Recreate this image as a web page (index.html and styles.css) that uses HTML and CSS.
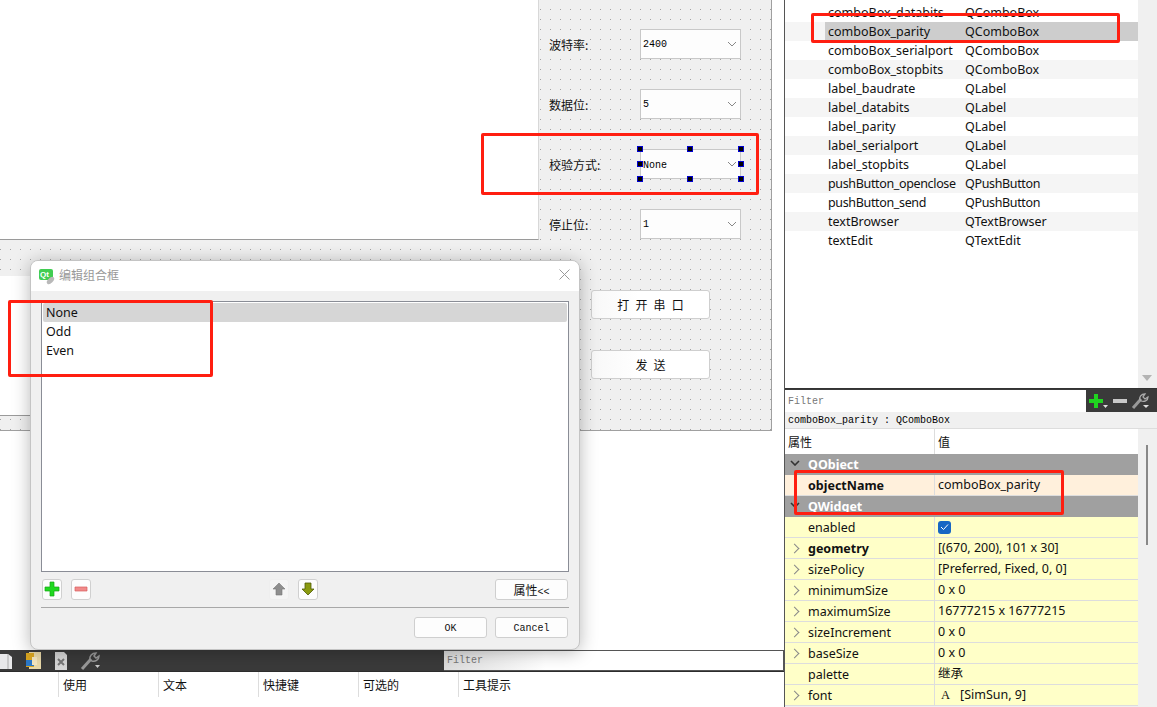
FILE: index.html
```html
<!DOCTYPE html>
<html lang="zh">
<head>
  <meta charset="UTF-8" />
  <title>Qt Designer</title>
  <link rel="stylesheet" href="styles.css">
</head>
<body>

  <div class="desk">

    <!-- form being edited -->
    <section class="form-area">
      <div class="text-browser"></div>
      <div class="text-edit"></div>

      <div class="form-row row-baud"><span class="form-label">波特率:</span><div class="combo">2400<svg class="chev" viewBox="0 0 10 6"><path d="M1 1l4 4 4-4"/></svg></div></div>
      <div class="form-row row-data"><span class="form-label">数据位:</span><div class="combo">5<svg class="chev" viewBox="0 0 10 6"><path d="M1 1l4 4 4-4"/></svg></div></div>
      <div class="form-row row-parity"><span class="form-label">校验方式:</span>
        <div class="combo combo-sel">None<svg class="chev" viewBox="0 0 10 6"><path d="M1 1l4 4 4-4"/></svg>
          <i class="h h1"></i><i class="h h2"></i><i class="h h3"></i><i class="h h4"></i><i class="h h5"></i><i class="h h6"></i><i class="h h7"></i><i class="h h8"></i>
        </div>
      </div>
      <div class="form-row row-stop"><span class="form-label">停止位:</span><div class="combo">1<svg class="chev" viewBox="0 0 10 6"><path d="M1 1l4 4 4-4"/></svg></div></div>
      <button class="form-btn btn-open">打 开 串 口</button>
      <button class="form-btn btn-send">发 送</button>
    </section>

    <!-- action editor -->
    <section class="action-editor">
      <div class="action-bar">
        <div class="action-tools">
          <svg class="tool" width="12" height="20" viewBox="0 0 12 20"><path d="M-6 3H8l4 3v12H-6z" fill="#e8e8ea"/><path d="M8 3v15" stroke="#aaa" fill="none"/></svg>
          <svg class="tool" width="18" height="20" viewBox="0 0 18 20"><path d="M5 1h12v17H5z" fill="#e9d9a8"/><path d="M2 2h8v14H2z" fill="#d9a520"/><path d="M2 9h8v6H2z" fill="#2b78c8"/><path d="M8 6h5v8H8z" fill="#f3e6c0"/></svg>
          <svg class="tool" width="14" height="20" viewBox="0 0 14 20"><path d="M1 1h9l3 3v15H1z" fill="#d6d6d6"/><path d="M4 8l6 6M10 8l-6 6" stroke="#777" stroke-width="2"/></svg>
          <svg class="tool" width="22" height="20" viewBox="0 0 22 20"><path d="M2 18L11 8" stroke="#999" stroke-width="3"/><path d="M10 9c-1-4 2-7 6-7l-2 3 2 2 3-2c0 4-4 6-7 5z" fill="none" stroke="#999" stroke-width="1.500"/><path d="M15 14h5l-2.500 3z" fill="#ccc"/></svg>
        </div>
        <div class="action-filter">Filter</div>
      </div>
      <div class="action-head">
        <span>使用</span><span>文本</span><span>快捷键</span><span>可选的</span><span>工具提示</span>
      </div>
    </section>

    <!-- combo box items dialog -->
    <section class="dialog">
      <header class="dlg-title">
        <span class="qt-logo">Qt</span>
        <span class="dlg-name">编辑组合框</span>
        <svg class="dlg-close" width="11" height="11" viewBox="0 0 11 11"><path d="M.5.500l10 10M10.500.500l-10 10"/></svg>
      </header>
      <div class="dlg-body">
        <ul class="item-list">
          <li class="item-on">None</li>
          <li>Odd</li>
          <li>Even</li>
        </ul>
        <div class="dlg-tools">
          <button class="ico-btn"><svg width="16" height="16" viewBox="0 0 16 16"><path d="M6 1h4v5h5v4h-5v5H6v-5H1V6h5z" fill="#1fd91f" stroke="#14a814" stroke-width=".7"/></svg></button>
          <button class="ico-btn"><svg width="16" height="16" viewBox="0 0 16 16"><path d="M2 6h12v4H2z" fill="#f08a8a" stroke="#d85c5c" stroke-width=".7"/></svg></button>
          <span class="tools-mid">
            <button class="ico-btn ico-off"><svg width="14" height="14" viewBox="0 0 14 14"><path d="M7 1l6 6h-3v6H4V7H1z" fill="#8e8e8e" stroke="#777" stroke-width=".6"/></svg></button>
            <button class="ico-btn"><svg width="14" height="14" viewBox="0 0 14 14"><path d="M7 13L1 7h3V1h6v6h3z" fill="#8a9a10" stroke="#4f5a06" stroke-width=".8"/></svg></button>
          </span>
          <button class="txt-btn props-btn">属性<span class="lt">&lt;&lt;</span></button>
        </div>
        <div class="dlg-foot">
          <button class="txt-btn">OK</button>
          <button class="txt-btn">Cancel</button>
        </div>
      </div>
    </section>

    <!-- object inspector + property editor -->
    <aside class="side">
      <div class="obj-panel">
        <table class="obj-table">
          <tr><td>comboBox_databits</td><td>QComboBox</td></tr>
          <tr class="alt sel"><td>comboBox_parity</td><td>QComboBox</td></tr>
          <tr><td>comboBox_serialport</td><td>QComboBox</td></tr>
          <tr class="alt"><td>comboBox_stopbits</td><td>QComboBox</td></tr>
          <tr><td>label_baudrate</td><td>QLabel</td></tr>
          <tr class="alt"><td>label_databits</td><td>QLabel</td></tr>
          <tr><td>label_parity</td><td>QLabel</td></tr>
          <tr class="alt"><td>label_serialport</td><td>QLabel</td></tr>
          <tr><td>label_stopbits</td><td>QLabel</td></tr>
          <tr class="alt tight"><td>pushButton_openclose</td><td>QPushButton</td></tr>
          <tr class="tight"><td>pushButton_send</td><td>QPushButton</td></tr>
          <tr class="alt"><td>textBrowser</td><td>QTextBrowser</td></tr>
          <tr><td>textEdit</td><td>QTextEdit</td></tr>
        </table>
      </div>
      <div class="prop-filter">
        <div class="prop-input">Filter</div>
        <svg class="bar-ico" width="22" height="18" viewBox="0 0 22 18"><path d="M6 2h4v5h5v4h-5v5H6v-5H1V7h5z" fill="#20d420"/><path d="M15 13h5l-2.500 3z" fill="#ddd"/></svg>
        <svg class="bar-ico" width="16" height="18" viewBox="0 0 16 18"><path d="M1 7h14v4H1z" fill="#c8c8c8"/></svg>
        <svg class="bar-ico" width="20" height="18" viewBox="0 0 20 18"><path d="M3 16L11 7" stroke="#999" stroke-width="3"/><path d="M10 8c-1-3 1-6 5-6l-2 3 2 2 3-2c0 4-4 5-7 4z" fill="none" stroke="#aaa" stroke-width="1.300"/><path d="M13 13h6l-3 3z" fill="#ddd"/></svg>
      </div>
      <div class="obj-name">comboBox_parity : QComboBox</div>
      <div class="prop-wrap">
        <div class="prop-table">
          <div class="prop-head"><span>属性</span><span>值</span></div>
          <div class="p-group"><svg class="arr" viewBox="0 0 10 6"><path d="M1 1l4 4 4-4"/></svg>QObject</div>
          <div class="p-row p-peach"><span class="p-k"><b>objectName</b></span><span class="p-v">comboBox_parity</span></div>
          <div class="p-group"><svg class="arr" viewBox="0 0 10 6"><path d="M1 1l4 4 4-4"/></svg>QWidget</div>
          <div class="p-row"><span class="p-k">enabled</span><span class="p-v"><span class="check"><svg width="9" height="8" viewBox="0 0 9 8"><path d="M1 4l2.500 2.500L8 1.500"/></svg></span></span></div>
          <div class="p-row p-more"><span class="p-k"><b>geometry</b></span><span class="p-v">[(670, 200), 101 x 30]</span></div>
          <div class="p-row p-more"><span class="p-k">sizePolicy</span><span class="p-v">[Preferred, Fixed, 0, 0]</span></div>
          <div class="p-row p-more"><span class="p-k">minimumSize</span><span class="p-v">0 x 0</span></div>
          <div class="p-row p-more"><span class="p-k">maximumSize</span><span class="p-v">16777215 x 16777215</span></div>
          <div class="p-row p-more"><span class="p-k">sizeIncrement</span><span class="p-v">0 x 0</span></div>
          <div class="p-row p-more"><span class="p-k">baseSize</span><span class="p-v">0 x 0</span></div>
          <div class="p-row"><span class="p-k">palette</span><span class="p-v">继承</span></div>
          <div class="p-row p-more"><span class="p-k">font</span><span class="p-v"><span class="font-a">A</span>[SimSun, 9]</span></div>
        </div>
        <div class="p-scroll"><i></i></div>
      </div>
    </aside>

    <!-- red annotation boxes -->
    <div class="mark m-list"></div>
    <div class="mark m-combo"></div>
    <div class="mark m-obj"></div>
    <div class="mark m-prop"></div>
  </div>

</body>
</html>
```

FILE: styles.css
```css
/* Base */
* { box-sizing: border-box; margin: 0; padding: 0; }
html, body { width: 100%; height: 100%; overflow: hidden; }
body {
  font-family: "Noto Sans", "Noto Sans CJK SC", sans-serif;
  font-size: 12px;
  color: #111;
  background: #fff;
}
button { font-family: inherit; }

/* Free canvas: the screenshot is a stack of overlapping windows */
.desk { position: relative; width: 1157px; height: 707px; overflow: hidden; }

/* Form */
.form-area {
  position: absolute;
  left: 0; top: 0;
  width: 772px; height: 431px;
  background-color: #f0f0f0;
  background-image: radial-gradient(circle at 0.5px 0.5px, #a4a4a4 0.6px, transparent 0.6px);
  background-size: 10px 10px;
  background-position: 0 -1px;
  border-right: 1px solid #a0a0a0;
  border-bottom: 1px solid #a0a0a0;
}
.text-browser {
  position: absolute;
  left: 0; top: 0;
  width: 539px; height: 240px;
  background: #fff;
  border-right: 1px solid #d8d8d8;
  border-bottom: 1px solid #9a9a9a;
}
.text-edit {
  position: absolute;
  left: 0; top: 276px;
  width: 539px; height: 140px;
  background: #fff;
  border-bottom: 1px solid #9a9a9a;
}
.form-row {
  position: absolute;
  left: 549px;
  display: flex;
  align-items: center;
  height: 30px;
  font-family: "Noto Sans CJK SC", sans-serif;
}
.row-baud { top: 29px; }
.row-data { top: 89px; }
.row-parity { top: 149px; }
.row-stop { top: 209px; }
.form-label { width: 91px; font-size: 12px; }
.combo {
  position: relative;
  display: flex;
  align-items: center;
  width: 101px; height: 30px;
  padding-left: 2px;
  background: #fdfdfd;
  border: 1px solid #c8c8c8;
  font-family: "Liberation Mono", monospace;
  font-size: 10px;
  color: #000;
}
.combo-sel { padding-top: 2px; }
.chev { position: absolute; right: 3px; top: 11px; width: 10px; height: 6px; fill: none; stroke: #888; stroke-width: 1; }

/* selection handles */
.h { position: absolute; width: 6px; height: 6px; background: #000; border: 1px solid #0000d0; }
.h1 { left: -4px; top: -4px; }
.h2 { left: 46px; top: -4px; }
.h3 { left: 97px; top: -4px; }
.h4 { left: -4px; top: 11px; }
.h5 { left: 97px; top: 11px; }
.h6 { left: -4px; top: 26px; }
.h7 { left: 46px; top: 26px; }
.h8 { left: 97px; top: 26px; }

.form-btn {
  position: absolute;
  left: 591px;
  width: 119px; height: 29px;
  background: linear-gradient(90deg, #f8f8f8, #fff 40%);
  border: 1px solid #cfcfcf;
  border-radius: 3px;
  font-family: "Noto Sans CJK SC", sans-serif;
  font-size: 12px;
  color: #111;
  word-spacing: 3.500px;
}
.btn-open { top: 290px; }
.btn-send { top: 350px; }

/* Action editor */
.action-editor { position: absolute; left: 0; top: 650px; width: 784px; }
.action-bar { display: flex; height: 22px; background: #3a3a3a; border-bottom: 1px solid #2c2c2c; }
.action-tools { display: flex; align-items: center; gap: 12px; width: 444px; }
.tool { display: block; flex: none; }
.action-filter {
  flex: 1;
  padding: 4px 0 0 3px;
  background: linear-gradient(90deg, #dcdcdc, #fff 30%);
  border: 1px solid #555;
  border-left: 0;
  font-family: "Liberation Mono", monospace;
  font-size: 10px;
  color: #777;
}
.action-head {
  display: flex;
  height: 25px;
  padding-left: 58px;
  background: #fff;
  font-family: "Noto Sans CJK SC", sans-serif;
  font-size: 12px;
}
.action-head span { width: 100px; padding: 3px 0 0 4px; border-left: 1px solid #ddd; line-height: 20px; }

/* Dialog */
.dialog {
  position: absolute;
  left: 30px; top: 260px;
  width: 550px; height: 390px;
  display: flex;
  flex-direction: column;
  background: #f0f0f0;
  border: 1px solid #c4c4c4;
  border-radius: 8px;
  box-shadow: 0 2px 18px rgba(0,0,0,0.28);
  overflow: hidden;
}
.dlg-title {
  display: flex;
  align-items: center;
  flex: none;
  height: 30px;
  padding: 0 9px 4px 8px;
  background: #fff;
}
.qt-logo {
  position: relative;
  width: 14px; height: 11px;
  margin-right: 6px;
  padding-left: 1px;
  background: #41cd52;
  border-radius: 2px;
  color: #fff;
  font-family: "Liberation Sans", sans-serif;
  font-size: 8px;
  font-weight: bold;
  line-height: 11px;
}
.qt-logo::after {
  content: "";
  position: absolute;
  right: -2px; bottom: -3px;
  width: 9px; height: 5px;
  background: #b9b9b9;
  border-radius: 50%;
  transform: rotate(-45deg);
}
.dlg-name { font-family: "Noto Sans CJK SC", sans-serif; font-size: 12px; color: #999; }
.dlg-close { margin-left: auto; fill: none; stroke: #999; }
.dlg-body { flex: 1; display: flex; flex-direction: column; padding: 10px 10px 0; }
.item-list {
  list-style: none;
  height: 271px;
  padding: 1px;
  background: #fff;
  border: 1px solid #8a8d96;
}
.item-list li { height: 19px; padding-left: 3px; font-size: 12.500px; line-height: 19px; }
.item-list .item-on { background: #d6d6d6; border-radius: 2px; }
.dlg-tools { display: flex; align-items: center; height: 22px; margin-top: 6px; padding-left: 1px; }
.ico-btn {
  display: flex;
  align-items: center;
  justify-content: center;
  width: 20px; height: 21px;
  margin-right: 9px;
  background: #fdfdfd;
  border: 1px solid #d0d0d0;
  border-radius: 3px;
}
.ico-off { background: #f4f4f4; border-color: #eee; }
.tools-mid { display: flex; margin-left: 169px; }
.txt-btn {
  width: 73px; height: 21px;
  padding-top: 2px;
  background: #fdfdfd;
  border: 1px solid #cfcfcf;
  border-radius: 3px;
  font-family: "Liberation Mono", "Noto Sans CJK SC", monospace;
  font-size: 10px;
  color: #111;
}
.props-btn { margin-left: auto; margin-right: 1px; padding-top: 0; font-family: "Noto Sans CJK SC", sans-serif; font-size: 12px; }
.lt { font-family: "Liberation Mono", monospace; font-size: 10px; }
.dlg-foot {
  display: flex;
  justify-content: flex-end;
  gap: 8px;
  margin-top: 7px;
  padding: 9px 1px 0 0;
  border-top: 1px solid #a8a8a8;
}

/* Side panels */
.side {
  position: absolute;
  left: 784px; top: 0;
  width: 373px; height: 707px;
  display: flex;
  flex-direction: column;
  background: #f0f0f0;
  border-left: 1px solid #555;
}
.obj-panel { position: relative; height: 388px; flex: none; background: #fff; border-right: 19px solid #f0f0f0; }
.obj-panel::after {
  content: "";
  position: absolute;
  right: -14px; top: 375px;
  border: 5px solid transparent;
  border-top: 6px solid #b4b4b4;
  border-bottom: 0;
}
.obj-table { width: 100%; margin-top: 3px; border-spacing: 0; font-size: 12.500px; }
.obj-table td { height: 19px; line-height: 19px; padding: 0; }
.obj-table td:first-child { width: 180px; padding-left: 3px; border-left: 40px solid transparent; background-clip: padding-box; }
.obj-table .alt { background: #f5f5f5; }
.obj-table .sel td { background-color: #cdcdcd; }
.obj-table .tight td { letter-spacing: -0.35px; }
.prop-filter { display: flex; align-items: center; flex: none; gap: 2px; height: 24px; background: #3a3a3a; border-top: 1px solid #333; }
.prop-input {
  width: 301px; height: 22px;
  padding: 6px 0 0 3px;
  background: #fff;
  font-family: "Liberation Mono", monospace;
  font-size: 10px;
  line-height: 12px;
  color: #777;
}
.obj-name {
  flex: none;
  height: 17px;
  padding-left: 3px;
  background: #f0f0f0;
  border-bottom: 1px solid #ddd;
  font-family: "Liberation Mono", monospace;
  font-size: 10px;
  line-height: 17px;
  color: #000;
}
.prop-wrap { flex: 1; display: flex; min-height: 0; }
.prop-table { width: 353px; font-size: 12.500px; }
.prop-head {
  display: flex;
  height: 25px;
  background: #fff;
  font-family: "Noto Sans CJK SC", sans-serif;
  font-size: 12px;
  line-height: 25px;
}
.prop-head span { padding-left: 3px; }
.prop-head span:first-child { width: 150px; border-right: 1px solid #ddd; }
.p-group {
  display: flex;
  align-items: center;
  position: relative;
  height: 21px;
  padding-left: 23px;
  background: #a0a0a0;
  color: #fff;
  font-weight: bold;
}
.arr { position: absolute; left: 5px; top: 6px; width: 10px; height: 6px; fill: none; stroke: #333; stroke-width: 1.600; }
.p-row {
  position: relative;
  display: flex;
  height: 21px;
  background: #ffffc8;
  border-bottom: 1px solid #ddd;
  line-height: 22px;
}
.p-peach { background: #fff0dc; }
.p-k { width: 150px; padding-left: 23px; border-right: 1px solid #ddd; flex: none; }
.p-v { padding-left: 3px; display: flex; align-items: center; }
.p-more::before {
  content: "";
  position: absolute;
  left: 6px; top: 7px;
  width: 6px; height: 6px;
  border-top: 1.500px solid #888;
  border-right: 1.500px solid #888;
  transform: rotate(45deg);
}
.check {
  display: flex;
  align-items: center;
  justify-content: center;
  width: 13px; height: 13px;
  background: #1767c4;
  border-radius: 3px;
}
.check svg { fill: none; stroke: #fff; stroke-width: 1; }
.font-a { margin: 0 10px 0 3px; font-family: "Liberation Serif", serif; }
.p-scroll { flex: 1; position: relative; background: #f0f0f0; }
.p-scroll i { position: absolute; left: 8px; top: 16px; width: 2px; height: 100px; background: #888; }

/* Red annotation boxes */
.mark { position: absolute; border: 3px solid #ff1e10; border-radius: 2px; }
.m-list { left: 8px; top: 300px; width: 205px; height: 77px; }
.m-combo { left: 481px; top: 133px; width: 278px; height: 62px; }
.m-obj { left: 811px; top: 13px; width: 309px; height: 30px; }
.m-prop { left: 794px; top: 470px; width: 270px; height: 45px; }
```
